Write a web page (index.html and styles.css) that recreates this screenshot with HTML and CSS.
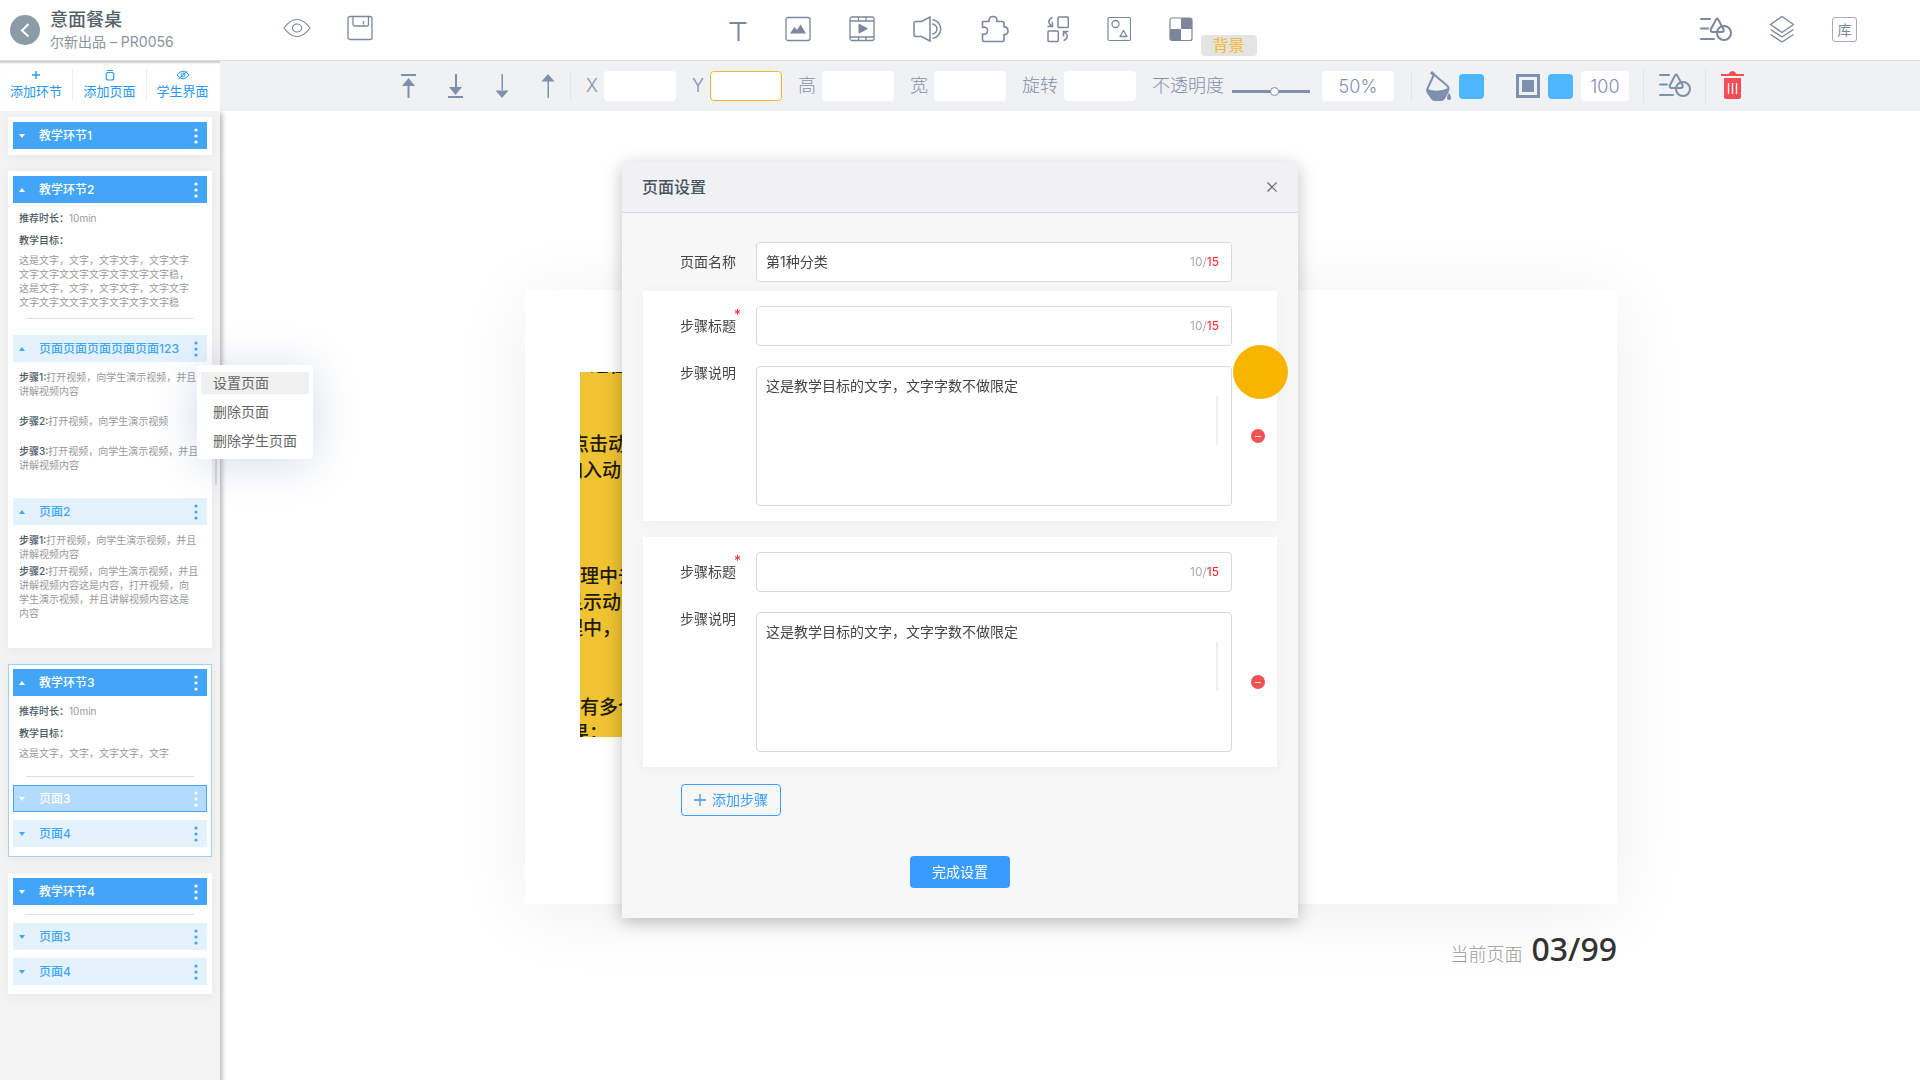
FILE: index.html
```html
<!DOCTYPE html>
<html lang="zh-CN">
<head>
<meta charset="utf-8">
<title>意面餐桌</title>
<link rel="stylesheet" href="styles.css">
</head>
<body>
<svg class="defs" aria-hidden="true">
  <symbol id="i-align" viewBox="0 0 32 26">
    <path d="M1 3h9M1 12.500h7M1 23h13" fill="none" stroke="currentColor" stroke-width="2" stroke-linecap="round"/>
    <path d="M16 3.500Q17 1.500 18.200 3.500L23.500 13Q24.500 15.500 22 16H12.500Q9.800 15.500 11 13Z" fill="none" stroke="currentColor" stroke-width="2"/>
    <circle cx="24" cy="17" r="7" fill="none" stroke="currentColor" stroke-width="2"/>
  </symbol>
  <symbol id="i-dots" viewBox="0 0 4 16">
    <g fill="currentColor"><circle cx="2" cy="2" r="1.600"/><circle cx="2" cy="8" r="1.600"/><circle cx="2" cy="14" r="1.600"/></g>
  </symbol>
  <symbol id="i-down" viewBox="0 0 6 4"><path d="M0 0h6L3 4z" fill="currentColor"/></symbol>
  <symbol id="i-up" viewBox="0 0 6 4"><path d="M0 4h6L3 0z" fill="currentColor"/></symbol>
</svg>

<header class="topbar">
  <div class="topbar-left">
    <button class="back" aria-label="返回"><svg width="30" height="30" viewBox="0 0 30 30"><path d="M18.500 9l-6.500 6.500 6.500 6" fill="none" stroke="#fff" stroke-width="2"/></svg></button>
    <div class="project">
      <h1>意面餐桌</h1>
      <p>尔新出品 – PR0056</p>
    </div>
    <button class="icon view" aria-label="预览"><svg width="28" height="20" viewBox="0 0 28 20"><path d="M1 10C5 4.500 9 1.500 14 1.500S23 4.500 27 10C23 15.500 19 18.500 14 18.500S5 15.500 1 10Z" fill="none" stroke="currentColor" stroke-width="1.200"/><ellipse cx="14" cy="10" rx="4.600" ry="4" fill="none" stroke="currentColor" stroke-width="1.200"/></svg></button>
    <button class="icon" aria-label="保存"><svg width="26" height="26" viewBox="0 0 26 26"><g fill="none" stroke="currentColor" stroke-width="1.300"><rect x="1" y="1.500" width="24" height="23" rx="2"/><path d="M6 1.500v8q0 1.500 1.500 1.500h12.500q1.500 0 1.500-1.500v-8M16.500 6v3.500"/></g></svg></button>
  </div>
  <nav class="tools">
    <button class="icon" aria-label="文本"><svg width="18" height="26" viewBox="0 0 18 26"><path d="M.5 7h17M9.500 7v18" fill="none" stroke="currentColor" stroke-width="2"/></svg></button>
    <button class="icon" aria-label="图片"><svg width="26" height="26" viewBox="0 0 26 26"><rect x="1" y="1.500" width="24" height="23" rx="2" fill="none" stroke="currentColor" stroke-width="1.300"/><path d="M5 17.500L9.500 11l2.500 3L15.500 8.500l5.500 9z" fill="currentColor"/></svg></button>
    <button class="icon" aria-label="视频"><svg width="26" height="26" viewBox="0 0 26 26"><g fill="none" stroke="currentColor" stroke-width="1.300"><rect x="1" y="1" width="24" height="23.500" rx="2"/><path d="M1 5h24M1 21h24M9.500 1v4M17 1v4M9.500 21v3.500M17 21v3.500"/></g><path d="M9.500 8.500q0-1 1.200-.4l7.500 4q1 .6 0 1.200l-7.500 4q-1.200.5-1.200-.6z" fill="currentColor"/></svg></button>
    <button class="icon" aria-label="音频"><svg width="30" height="28" viewBox="0 0 30 28"><g fill="none" stroke="currentColor" stroke-width="1.500"><path d="M17 2v24L8.500 21.500H2.500q-1.500 0-1.500-1.500V8q0-1.500 1.500-1.500h6z"/><path d="M19 9a5 5 0 0 1 0 10M19.500 4.500a9.600 9.600 0 0 1 0 19"/></g></svg></button>
    <button class="icon" aria-label="组件"><svg width="28" height="28" viewBox="0 0 28 28"><path d="M1.500 6.500H8C7.500 3 9.500 1.500 12 1.500S16.500 3 16 6.500h5q2 0 2 2V12C25.500 11.500 27 13.500 27 16S25.500 20 23 19.500V25q0 1.500-1.500 1.500H3Q1.500 26.500 1.500 25V19C5 20 6.500 18 6.500 15.500S5 11.500 1.500 12.500Z" fill="none" stroke="currentColor" stroke-width="1.600" stroke-linejoin="round"/></svg></button>
    <button class="icon" aria-label="替换"><svg width="22" height="28" viewBox="0 0 22 28"><g fill="none" stroke="currentColor" stroke-width="1.500"><rect x="11" y="2" width="10.300" height="10.500" rx="1"/><rect x="1" y="16" width="10.300" height="10.500" rx="1"/><path d="M5.500 2.500C1 4 .5 8 4.500 11M5.500 7v4.500H.5M16.500 25.500c4.500-1.500 5-5.500 1-8.500M16.500 21.500v-5h5"/></g></svg></button>
    <button class="icon" aria-label="形状"><svg width="24" height="26" viewBox="0 0 24 26"><g fill="none" stroke="currentColor"><rect x="1" y="1.500" width="22.500" height="23" rx="1.500" stroke-width="1.200"/><circle cx="8.500" cy="8" r="3.500" stroke-width="1.300"/><path d="M16.500 14.500l3.500 6h-7z" stroke-width="1.300" stroke-linejoin="round"/></g></svg></button>
    <div class="bg-tool">
      <button class="icon" aria-label="背景"><svg width="24" height="26" viewBox="0 0 24 26"><rect x="1" y="2" width="22" height="22.500" rx="2" fill="none" stroke="currentColor" stroke-width="1.200"/><path d="M12 2h9q2 0 2 2v9H12zM1 13h11v11.500H3q-2 0-2-2z" fill="currentColor"/></svg></button>
      <span class="tip">背景</span>
    </div>
  </nav>
  <div class="topbar-right">
    <button class="icon" aria-label="对齐"><svg width="32" height="26"><use href="#i-align"/></svg></button>
    <button class="icon" aria-label="图层"><svg width="26" height="28" viewBox="0 0 26 28"><g fill="none" stroke="currentColor" stroke-width="1.400" stroke-linejoin="round"><path d="M13 1.500L24.500 9.500 13 17.500 1.500 9.500z"/><path d="M1.500 14.500l11.500 7.500 11.500-7.500M1.500 19.500L13 27l11.500-7.500"/></g></svg></button>
    <button class="library">库</button>
  </div>
</header>

<div class="layout">
  <aside class="sidebar">
    <nav class="tabs">
      <button><svg width="12" height="12" viewBox="0 0 12 12"><path d="M2 6h8M6 2v8" stroke="currentColor" stroke-width="1.300"/></svg>添加环节</button>
      <button><svg width="12" height="12" viewBox="0 0 12 12"><path d="M3 1.500h6M3.500 3.500h5l1.300 2v3.500q0 2-2 2H4.200q-2 0-2-2V5.500z" fill="none" stroke="currentColor" stroke-width="1.200"/></svg>添加页面</button>
      <button><svg width="14" height="12" viewBox="0 0 14 12"><g fill="none" stroke="currentColor"><path d="M1 6Q4 2.200 7 2.200T13 6Q10 9.800 7 9.800T1 6Z"/><circle cx="7" cy="6" r="2"/><path d="M2.500 10L11.500 2"/></g></svg>学生界面</button>
    </nav>

    <div class="sections">
      <section class="card">
        <h2 class="bar"><svg class="arrow"><use href="#i-down"/></svg><span>教学环节1</span><button aria-label="更多"><svg class="dots"><use href="#i-dots"/></svg></button></h2>
      </section>

      <section class="card">
        <h2 class="bar"><svg class="arrow"><use href="#i-up"/></svg><span>教学环节2</span><button aria-label="更多"><svg class="dots"><use href="#i-dots"/></svg></button></h2>
        <div class="info">
          <p><b>推荐时长：</b>10min</p>
          <p><b>教学目标：</b></p>
          <p class="goal">这是文字，文字，文字文字，文字文字文字文字文文字文字文字文字文字稳，这是文字，文字，文字文字，文字文字文字文字文文字文字文字文字文字稳</p>
        </div>
        <hr>
        <div class="page first">
          <h3 class="bar light"><svg class="arrow"><use href="#i-up"/></svg><span>页面页面页面页面页面123</span><button aria-label="更多"><svg class="dots"><use href="#i-dots"/></svg></button></h3>
          <ul class="menu">
            <li><button class="active">设置页面</button></li>
            <li><button>删除页面</button></li>
            <li><button>删除学生页面</button></li>
          </ul>
          <div class="steps loose">
            <p><b>步骤1:</b>打开视频，向学生演示视频，并且<br>讲解视频内容</p>
            <p><b>步骤2:</b>打开视频，向学生演示视频</p>
            <p><b>步骤3:</b>打开视频，向学生演示视频，并且<br>讲解视频内容</p>
          </div>
        </div>
        <div class="page">
          <h3 class="bar light"><svg class="arrow"><use href="#i-up"/></svg><span>页面2</span><button aria-label="更多"><svg class="dots"><use href="#i-dots"/></svg></button></h3>
          <div class="steps">
            <p><b>步骤1:</b>打开视频，向学生演示视频，并且<br>讲解视频内容</p>
            <p><b>步骤2:</b>打开视频，向学生演示视频，并且<br>讲解视频内容这是内容，打开视频，向<br>学生演示视频，并且讲解视频内容这是<br>内容</p>
          </div>
        </div>
      </section>

      <section class="card current">
        <h2 class="bar"><svg class="arrow"><use href="#i-up"/></svg><span>教学环节3</span><button aria-label="更多"><svg class="dots"><use href="#i-dots"/></svg></button></h2>
        <div class="info short">
          <p><b>推荐时长：</b>10min</p>
          <p><b>教学目标：</b></p>
          <p class="goal">这是文字，文字，文字文字，文字</p>
        </div>
        <hr>
        <div class="pages">
          <h3 class="bar light selected"><svg class="arrow"><use href="#i-down"/></svg><span>页面3</span><button aria-label="更多"><svg class="dots"><use href="#i-dots"/></svg></button></h3>
          <h3 class="bar light"><svg class="arrow"><use href="#i-down"/></svg><span>页面4</span><button aria-label="更多"><svg class="dots"><use href="#i-dots"/></svg></button></h3>
        </div>
      </section>

      <section class="card">
        <h2 class="bar"><svg class="arrow"><use href="#i-down"/></svg><span>教学环节4</span><button aria-label="更多"><svg class="dots"><use href="#i-dots"/></svg></button></h2>
        <hr>
        <div class="pages">
          <h3 class="bar light"><svg class="arrow"><use href="#i-down"/></svg><span>页面3</span><button aria-label="更多"><svg class="dots"><use href="#i-dots"/></svg></button></h3>
          <h3 class="bar light"><svg class="arrow"><use href="#i-down"/></svg><span>页面4</span><button aria-label="更多"><svg class="dots"><use href="#i-dots"/></svg></button></h3>
        </div>
      </section>
    </div>
    <span class="side-thumb"></span>
  </aside>

  <main class="workspace">
    <div class="props">
      <div class="arrange">
        <button class="icon" aria-label="置顶"><svg width="15" height="24" viewBox="0 0 15 24"><path d="M0 0h15v2H0zM7.500 4L14 12H1zM6.500 12h2v12h-2z" fill="currentColor"/></svg></button>
        <button class="icon" aria-label="置底"><svg width="15" height="24" viewBox="0 0 15 24"><path d="M0 22h15v2H0zM7.500 21L14 13H1zM7 0h2v13H7z" fill="currentColor"/></svg></button>
        <button class="icon" aria-label="下移"><svg width="14" height="24" viewBox="0 0 14 24"><path d="M7 24l6.500-7.500H.5zM6.500 0H8v17H6.500z" fill="currentColor"/></svg></button>
        <button class="icon" aria-label="上移"><svg width="14" height="24" viewBox="0 0 14 24"><path d="M7 0l6.500 7.500H.5zM6.500 7H8v17H6.500z" fill="currentColor"/></svg></button>
      </div>
      <div class="geometry">
        <label>X<input type="text"></label>
        <label>Y<input type="text" class="focus"></label>
        <label>高<input type="text"></label>
        <label>宽<input type="text"></label>
        <label>旋转<input type="text"></label>
        <div class="opacity">
          <label for="opacity">不透明度</label>
          <input id="opacity" type="range" min="0" max="100" value="55">
          <input type="text" value="50%" aria-label="不透明度数值">
        </div>
      </div>
      <div class="paint">
        <svg class="bucket" width="25" height="30" viewBox="0 0 25 30"><path d="M5 1l3 3" stroke="currentColor" stroke-width="3"/><path d="M8 3.500L21.500 15Q23.500 17 21.500 21L18 27.500q-1 1.500-3 1.500H9q-2 0-3-1.500L1.500 21Q.5 19 2 16.500z" fill="none" stroke="currentColor" stroke-width="2"/><path d="M1.500 18q10 4 21-1l-1 5-4 6q-1 1.500-3 1.500H9q-2 0-3-1.500L1.500 22zM23 21.500q2 3.500 2 5.500 0 2-2 2t-2-2q0-2 2-5.500z" fill="currentColor"/></svg>
        <input type="color" value="#4cb6ff" aria-label="填充颜色">
        <svg class="outline" width="24" height="24" viewBox="0 0 24 24"><rect x="1.500" y="1.500" width="21" height="21" fill="none" stroke="currentColor" stroke-width="3"/><path d="M6 6h12v12H6z" fill="currentColor"/></svg>
        <input type="color" value="#4cb6ff" aria-label="边框颜色">
        <input type="text" class="small" value="100" aria-label="边框宽度">
      </div>
      <div class="group"><button class="icon" aria-label="对齐"><svg width="32" height="26"><use href="#i-align"/></svg></button></div>
      <div class="group"><button class="icon trash" aria-label="删除"><svg width="23" height="28" viewBox="0 0 23 28"><path d="M0 3h7.500Q9 0 11.500 0t4 3H23v2H0z" fill="currentColor"/><path d="M3 7h17v19q0 2-2 2H5q-2 0-2-2z" fill="currentColor"/><path d="M7.500 12v11M11.500 12v11M15.500 12v11" stroke="#fff" stroke-width="1.300"/></svg></button></div>
    </div>

    <div class="stage">
      <div class="slide">
        <div class="picture">
          <div class="block"><p class="indent">进在</p></div>
          <div class="block mid"><p class="cut-half">点击动画</p><p class="cut">加入动画</p></div>
          <div class="block low"><p>理中去掉</p><p class="cut">显示动画</p><p class="cut">理中，并</p></div>
          <div class="block end"><p>有多个结</p><p class="cut-half">果；</p></div>
        </div>
      </div>
      <p class="counter">当前页面<strong>03/99</strong></p>
    </div>
  </main>
</div>

<div class="overlay">
  <form class="modal" role="dialog" aria-labelledby="dlg-title">
    <header>
      <h2 id="dlg-title">页面设置</h2>
      <button type="button" class="close" aria-label="关闭"><svg width="10" height="10" viewBox="0 0 10 10"><path d="M.5.500l9 9M9.500.500l-9 9" stroke="currentColor" stroke-width="1.200"/></svg></button>
    </header>
    <div class="body">
      <div class="field">
        <label for="name">页面名称</label>
        <div class="box"><input id="name" type="text" value="第1种分类"><span>10/<em>15</em></span></div>
      </div>
      <fieldset class="step">
        <div class="field">
          <label for="t1" class="required">步骤标题</label>
          <div class="box"><input id="t1" type="text"><span>10/<em>15</em></span></div>
        </div>
        <div class="field top">
          <label for="d1">步骤说明</label>
          <div class="area"><textarea id="d1">这是教学目标的文字，文字字数不做限定</textarea><i></i></div>
          <button type="button" class="remove" aria-label="删除步骤"></button>
        </div>
        <span class="pointer"></span>
      </fieldset>
      <fieldset class="step">
        <div class="field">
          <label for="t2" class="required">步骤标题</label>
          <div class="box"><input id="t2" type="text"><span>10/<em>15</em></span></div>
        </div>
        <div class="field top">
          <label for="d2">步骤说明</label>
          <div class="area"><textarea id="d2">这是教学目标的文字，文字字数不做限定</textarea><i></i></div>
          <button type="button" class="remove" aria-label="删除步骤"></button>
        </div>
      </fieldset>
      <button type="button" class="add"><svg width="12" height="12" viewBox="0 0 12 12"><path d="M0 6h12M6 0v12" stroke="currentColor" stroke-width="1.300"/></svg>添加步骤</button>
      <button type="button" class="done">完成设置</button>
    </div>
  </form>
</div>
</body>
</html>
```

FILE: styles.css
```css
* { box-sizing: border-box; margin: 0; padding: 0; }

body {
  min-height: 100vh;
  display: flex;
  flex-direction: column;
  background: #fff;
  color: #444;
  font: 14px/20px Inter, "Noto Sans CJK SC", sans-serif;
}

button, input, textarea { font: inherit; color: inherit; border: 0; background: none; outline: 0; }
button { cursor: pointer; }
ul { list-style: none; }
svg { display: block; }
.defs { position: absolute; width: 0; height: 0; }
.icon { display: flex; color: #7c879b; }

/* top bar */
.topbar {
  height: 61px;
  display: grid;
  grid-template-columns: 1fr auto 1fr;
  border-bottom: 1px solid #ddd;
}
.topbar-left { display: flex; align-items: center; padding-left: 10px; }
.back { border-radius: 50%; background: #8b9ca6; }
.project { width: 243px; padding-left: 10px; }
.project h1 { font-size: 18px; line-height: 24px; font-weight: 500; color: #536169; }
.project p { color: #8a9499; }
.view { margin-right: 36px; }
.topbar-left .icon { margin-bottom: 4px; }
.tools { display: flex; align-items: center; gap: 38px; padding-left: 65px; }
.tools .icon { margin-bottom: 3px; }
.bg-tool { display: flex; gap: 8px; align-items: center; height: 100%; }
.tip {
  align-self: flex-end;
  width: 56px;
  margin-bottom: 4px;
  border-radius: 4px;
  background: #e4e4e4;
  color: #fbb62d;
  font-size: 16px;
  line-height: 21px;
  text-align: center;
}
.topbar-right { display: flex; align-items: center; justify-content: flex-end; gap: 37px; padding: 0 63px 2px 0; }
.library {
  width: 25px;
  height: 25px;
  border: 1px solid #a3abb9;
  border-radius: 3px;
  color: #7c879b;
  line-height: 23px;
}

.layout { flex: 1; display: flex; }

/* sidebar */
.sidebar {
  position: relative;
  z-index: 1;
  width: 220px;
  flex: none;
  background: #f3f3f3;
  box-shadow: 2px 52px 5px rgba(0, 0, 0, .3);
}
.tabs {
  height: 50px;
  display: grid;
  grid-template-columns: 72px 1fr 72px;
  padding: 8px 2px 14px 0;
  background: #fff;
  box-shadow: inset 0 3px 2px -1px rgba(0, 0, 0, .2);
}
.tabs button {
  display: flex;
  flex-direction: column;
  align-items: center;
  color: #2a97f8;
  font-size: 13px;
  line-height: 20px;
}
.tabs button + button { border-left: 1px solid #eee; }
.sections { display: flex; flex-direction: column; gap: 16px; padding: 6px 8px; }
.card { padding: 5px 5px 6px; background: #fff; box-shadow: 0 2px 12px rgba(0, 0, 0, .05); }
.card.current { padding: 4px 4px 9px; border: 1px solid #9fd2fb; }
.card:last-child { padding-bottom: 9px; }
.bar {
  height: 27px;
  display: flex;
  align-items: center;
  padding: 0 9px 0 6px;
  background: #42a5f8;
  color: #fff;
  font-size: 12px;
  line-height: 20px;
  font-weight: 500;
}
.bar span { flex: 1; padding-left: 14px; }
.bar.light { background: #e4f2fe; color: #42a5f8; }
.bar.light.selected { background: #b3daff; border: 1px solid #4aa6f5; color: #fff; padding: 0 8px 0 5px; }
.arrow { width: 6px; height: 4px; }
.dots { width: 4px; height: 16px; }
.info, .steps { padding: 8px 9px 0 6px; color: #999; font-size: 10px; line-height: 14px; }
.info b, .steps b { font-weight: 500; color: #4b5a62; }
.info { display: flex; flex-direction: column; gap: 8px; }
.info .goal { margin-top: -2px; }
.info.short { padding-bottom: 7px; }
.card hr { margin: 9px 13px 8px; border: 0; border-top: 1px solid #e0e0e0; }
.page { position: relative; }
.page.first { margin-top: 16px; }
.steps { display: flex; flex-direction: column; gap: 3px; padding-bottom: 22px; white-space: nowrap; }
.steps.loose { gap: 16px; padding-bottom: 26px; }
.pages { display: flex; flex-direction: column; gap: 8px; }
.side-thumb { position: absolute; right: 3px; top: 339px; width: 2px; height: 85px; background: #d3d5d9; }

/* page menu */
.menu {
  position: absolute;
  z-index: 2;
  top: 30px;
  left: 184px;
  width: 116px;
  display: flex;
  flex-direction: column;
  gap: 7px;
  padding: 7px 4px;
  border-radius: 4px;
  background: #fff;
  box-shadow: 0 4px 44px rgba(60, 90, 140, .22);
}
.menu button { width: 100%; padding-left: 12px; line-height: 22px; text-align: left; color: #666; }
.menu .active { background: #f0f0f0; }

/* property bar */
.workspace { flex: 1; min-width: 0; }
.props {
  height: 50px;
  display: flex;
  align-items: center;
  padding-left: 181px;
  background: #f0f1f3;
  color: #7f8fae;
  font-size: 18px;
  font-weight: 300;
}
.props .icon { color: #7f8fae; }
.props .trash { color: #f34e57; }
.arrange { display: flex; gap: 32px; padding-right: 15px; }
.geometry { display: flex; gap: 16px; padding: 0 17px 0 15px; }
.geometry label { display: flex; align-items: center; gap: 6px; white-space: nowrap; }
.geometry, .paint, .group { position: relative; border-left: 1px solid #e3e4e7; }
.props input[type="text"] { width: 72px; height: 30px; border-radius: 4px; background: #fff; text-align: center; }
.props input.focus { border: 1px solid #fbb62d; }
.props input.small { width: 48px; }
.opacity { display: flex; align-items: center; }
.opacity input[type="range"] {
  appearance: none;
  width: 78px;
  height: 9px;
  margin: 10px 12px 0 8px;
  background: linear-gradient(#7f8fae, #7f8fae) center / 100% 3px no-repeat;
}
input[type="range"]::-webkit-slider-thumb {
  appearance: none;
  width: 9px;
  height: 9px;
  border: 1px solid #7f8fae;
  border-radius: 50%;
  background: #fff;
}
.paint { display: flex; align-items: center; gap: 8px; padding: 0 14px; }
.outline { margin-left: 24px; }
.props input[type="color"] { width: 25px; height: 25px; border-radius: 4px; overflow: hidden; }
input[type="color"]::-webkit-color-swatch-wrapper { padding: 0; }
input[type="color"]::-webkit-color-swatch { border: 0; }
.group { height: 34px; display: flex; align-items: center; padding: 0 14px 2px 15px; }

/* slide */
.stage { padding: 179px 303px 0 305px; }
.slide {
  aspect-ratio: 1092 / 614;
  padding: 82px 55px;
  background: #fff;
  box-shadow: 0 8px 70px rgba(0, 0, 0, .07);
}
.picture {
  width: 480px;
  height: 365px;
  overflow: hidden;
  background: #f0c332;
  color: #1d1a10;
  font-size: 19px;
  font-weight: 500;
  line-height: 26px;
  white-space: nowrap;
}
.block:first-child { margin-top: -19px; }
.block.mid { margin-top: 53px; }
.block.low { margin-top: 80px; }
.block.end { margin-top: 53px; }
.indent { text-indent: 10px; }
.cut { text-indent: -16px; }
.cut-half { text-indent: -10px; }
.counter {
  display: flex;
  justify-content: flex-end;
  align-items: baseline;
  gap: 9px;
  padding-top: 23px;
  color: #999;
  font-size: 18px;
  font-weight: 300;
}
.counter strong { color: #333; font: 500 32px/44px "Noto Sans", sans-serif; }

/* dialog */
.overlay { position: fixed; z-index: 10; inset: 0; display: flex; align-items: center; justify-content: center; }
.modal { width: 676px; background: #f7f7f7; box-shadow: 0 4px 16px rgba(0, 0, 0, .25); }
.modal header {
  height: 51px;
  display: flex;
  align-items: center;
  justify-content: space-between;
  padding: 0 21px 0 20px;
  background: #f0f0f5;
  border-bottom: 1px solid #d8d8da;
}
.modal h2 { font-size: 16px; font-weight: 500; color: #46545c; }
.close { color: #5b6b73; }
.body { display: flex; flex-direction: column; padding: 29px 21px 30px; }
.field { position: relative; display: flex; align-items: center; padding: 0 45px 0 37px; }
.field label { position: relative; width: 76px; }
.required::after { content: "*"; position: absolute; left: 54px; top: -11px; color: #f5222d; }
.box, .area { flex: 1; display: flex; background: #fff; border: 1px solid #d9d9d9; border-radius: 4px; }
.box { height: 40px; align-items: center; padding: 0 12px 0 9px; }
.box input { flex: 1; min-width: 0; }
.box span { color: #aaa; font-size: 12px; }
.box em { font-style: normal; color: #ff1f1f; }
.area { position: relative; height: 140px; }
.area textarea { flex: 1; resize: none; padding: 9px; }
.area i { position: absolute; right: 13px; top: 29px; width: 2px; height: 49px; background: #eee; }
.field.top { align-items: flex-start; margin-top: 20px; }
.field.top label { line-height: 14px; }
.step { position: relative; margin-top: 9px; padding: 15px 0; border: 0; background: #fff; box-shadow: 0 2px 16px rgba(0, 0, 0, .04); }
.step + .step { margin-top: 16px; }
.remove {
  position: absolute;
  right: 12px;
  top: 63px;
  width: 14px;
  height: 14px;
  border-radius: 50%;
  background: linear-gradient(#fbd5d5, #fbd5d5) center / 6px 1px no-repeat #ee5253;
}
.pointer { position: absolute; right: -11px; top: 54px; width: 55px; height: 54px; border-radius: 50%; background: #f8b500; }
.add, .done { width: 100px; height: 32px; border-radius: 4px; }
.add {
  display: flex;
  align-items: center;
  justify-content: center;
  gap: 6px;
  margin: 17px 0 40px 38px;
  border: 1px solid #3a9bfc;
  color: #3a9bfc;
}
.done { align-self: center; background: #3a9bff; color: #fff; }
```
